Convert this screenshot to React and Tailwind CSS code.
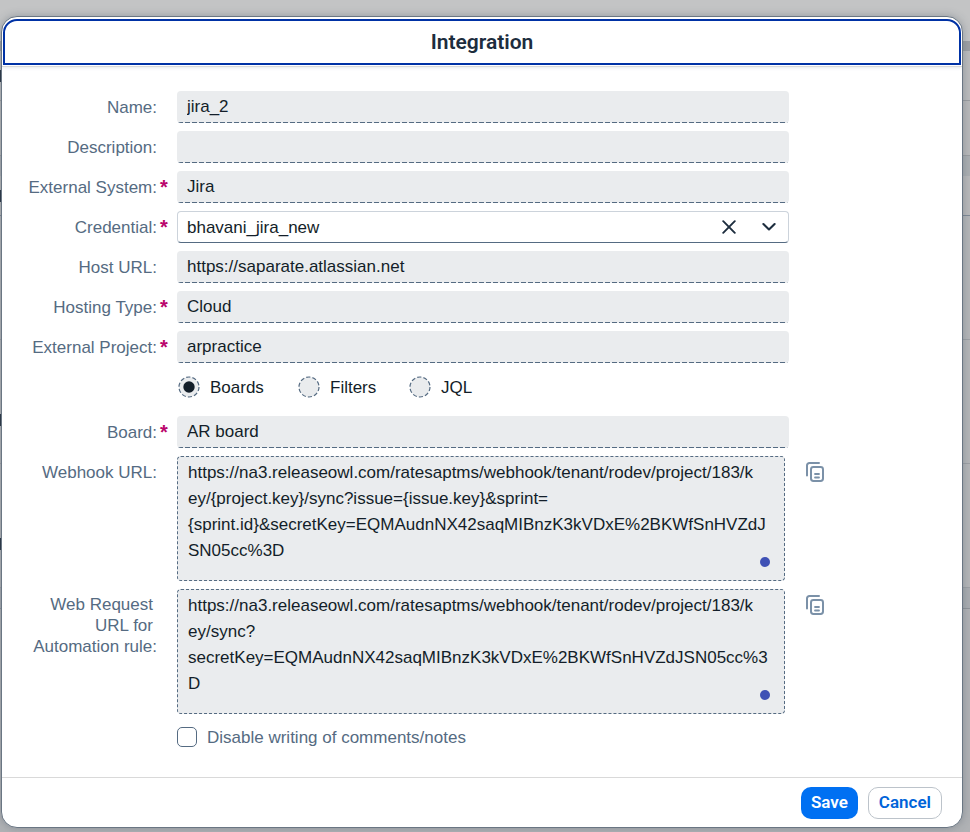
import { useState } from 'react';

const WEBHOOK_URL = [
  'https://na3.releaseowl.com/ratesaptms/webhook/tenant/rodev/project/183/k',
  'ey/{project.key}/sync?issue={issue.key}&sprint=',
  '{sprint.id}&secretKey=EQMAudnNX42saqMIBnzK3kVDxE%2BKWfSnHVZdJ',
  'SN05cc%3D',
].join('\n');

const AUTOMATION_URL = [
  'https://na3.releaseowl.com/ratesaptms/webhook/tenant/rodev/project/183/k',
  'ey/sync?',
  'secretKey=EQMAudnNX42saqMIBnzK3kVDxE%2BKWfSnHVZdJSN05cc%3',
  'D',
].join('\n');

const ROW = 'grid grid-cols-[175px_minmax(0,1fr)_173px]';

function Label({ htmlFor, required, children }) {
  return (
    <label htmlFor={htmlFor} className="flex h-8 items-center justify-end whitespace-nowrap text-[#556b82]">
      {children}:
      <span aria-hidden="true" className="h-5 w-5 pl-[3px] text-xl leading-5 font-bold text-[#ba066c]">
        {required ? '*' : ''}
      </span>
    </label>
  );
}

function ReadOnlyField({ id, label, value, required }) {
  return (
    <div className={ROW}>
      <Label htmlFor={id} required={required}>{label}</Label>
      <input
        id={id}
        readOnly
        value={value}
        className="h-8 w-full rounded bg-[#eaecee] bg-[repeating-linear-gradient(90deg,#556b82_0_5px,#eaecee_5px_7px)] bg-[length:calc(100%-2px)_1px] bg-[position:1px_100%] bg-no-repeat px-2.5 text-[#131e29] outline-none"
      />
    </div>
  );
}

function RadioOption({ label, checked, onChange, className }) {
  return (
    <label className={`flex items-center gap-2.5 text-[#131e29] ${className}`}>
      <span className="grid">
        <input
          type="radio"
          name="source"
          checked={checked}
          onChange={onChange}
          className="col-start-1 row-start-1 size-[22px] appearance-none rounded-full outline-none"
        />
        <svg viewBox="0 0 22 22" className="pointer-events-none col-start-1 row-start-1 size-[22px]">
          <circle cx="11" cy="11" r="10" fill="#eaecee" stroke="#556b82" strokeWidth="1.2" strokeDasharray="4.2 2.083" />
          {checked && <circle cx="11" cy="11" r="5.7" fill="#131e29" />}
        </svg>
      </span>
      {label}
    </label>
  );
}

function CopyButton({ label }) {
  return (
    <button type="button" aria-label={label} className="ml-[17px] flex h-8 w-[18px] items-center self-start">
      <svg viewBox="0 0 18 20" fill="none" stroke="#7b91a8" strokeWidth="2" strokeLinecap="round" className="h-5 w-[18px]">
        <path d="M1 13.5V3.4A2.4 2.4 0 0 1 3.4 1H13" />
        <rect x="5" y="5" width="12" height="14" rx="2.4" />
        <path d="M9 12h4M9 15.5h4" strokeWidth="1.8" />
      </svg>
    </button>
  );
}

function UrlArea({ id, value }) {
  return (
    <div className="relative mr-1">
      <textarea
        id={id}
        readOnly
        wrap="off"
        value={value}
        className="block h-[125px] w-full resize-none overflow-hidden rounded border border-dashed border-[#556b82] bg-[#eaecee] px-2.5 py-[3px] leading-[26px] text-[#131e29] outline-none"
      />
      <span className="absolute right-[15px] bottom-[14px] size-2.5 rounded-full bg-[#3f51b5]" />
    </div>
  );
}

function Backdrop() {
  return (
    <div aria-hidden="true" className="absolute inset-0 flex flex-col bg-[#b4b6b8]">
      <div className="h-[41px] bg-[#c3c4c5]" />
      <div className="h-2.5 bg-[#9da0a4]" />
      <div className="flex h-[50px] items-center border-b border-[#9b9ea1] bg-[#bbbcbd]">
        <span className="h-3 w-0.5 bg-[#2a3644]" />
      </div>
      <div className="h-[55px] border-b border-[#9b9ea1] bg-[#b8b9ba]" />
      <div className="h-5 bg-[#abafb2]" />
      <div className="flex h-10 items-center border-b border-[#7f8a96] bg-[#b8b9ba]">
        <span className="h-3 w-0.5 bg-[#2a3644]" />
      </div>
      <div className="h-[124px] border-b border-[#9da1a5]" />
      <div className="h-[124px] border-b border-[#9da1a5] pt-[74px]">
        <div className="h-3 w-0.5 bg-[#2a3644]" />
      </div>
      <div className="h-[124px] border-b border-[#9da1a5] pt-[74px]">
        <div className="h-3 w-0.5 bg-[#2a3644]" />
      </div>
      <div className="h-[21px] border-b border-[#8f9499] bg-[#a9adb1]" />
      <div className="grow bg-[#b0b2b5]" />
    </div>
  );
}

export default function App() {
  const [source, setSource] = useState('Boards');
  const [disableNotes, setDisableNotes] = useState(false);

  return (
    <div className="relative min-h-screen pt-4 pr-[7px] pb-1 pl-px font-['Liberation_Sans',Arial,sans-serif] text-[17px] leading-[21px]">
      <Backdrop />
      <section
        role="dialog"
        aria-labelledby="dialog-title"
        className="relative overflow-hidden rounded-2xl border border-[#6a7683] bg-white shadow-[0_0_8px_rgba(60,75,90,0.35)]"
      >
        <header className="border-b border-[#d9d9d9] px-px pt-[2px] pb-px shadow-[0_1px_3px_rgba(85,107,130,0.15)]">
          <div className="flex h-[46px] items-center justify-center rounded-t-[14px] border-2 border-[#0032a5]">
            <h1 id="dialog-title" className="font-['Roboto',sans-serif] text-[21px] font-semibold text-[#1d2d3e]">Integration</h1>
          </div>
        </header>

        <form className="flex flex-col gap-2 pt-6 pb-[25px]">
          <ReadOnlyField id="name" label="Name" value="jira_2" />
          <ReadOnlyField id="description" label="Description" value="" />
          <ReadOnlyField id="system" label="External System" value="Jira" required />
          <div className={ROW}>
            <Label htmlFor="credential" required>Credential</Label>
            <div className="flex h-8 items-center rounded border border-[#ccd3db] border-b-[#556b82] bg-white text-[#131e29]">
              <input
                id="credential"
                role="combobox"
                aria-expanded="false"
                defaultValue="bhavani_jira_new"
                className="min-w-0 grow bg-transparent pl-[9px] outline-none"
              />
              <button type="button" aria-label="Clear" className="flex h-full w-[42px] items-center justify-center">
                <svg viewBox="0 0 14 14" fill="none" stroke="#1d2d3e" strokeWidth="1.9" strokeLinecap="round" className="size-3.5">
                  <path d="M1.2 1.2l11.6 11.6M12.8 1.2L1.2 12.8" />
                </svg>
              </button>
              <button type="button" aria-label="Show options" className="flex h-full w-[38px] items-center justify-center">
                <svg viewBox="0 0 14 14" fill="none" stroke="#1d2d3e" strokeWidth="2.1" strokeLinecap="round" strokeLinejoin="round" className="size-3.5">
                  <path d="M1.4 4L7 9.4l5.6-5.4" />
                </svg>
              </button>
            </div>
          </div>
          <ReadOnlyField id="host" label="Host URL" value="https://saparate.atlassian.net" />
          <ReadOnlyField id="hosting" label="Hosting Type" value="Cloud" required />
          <ReadOnlyField id="project" label="External Project" value="arpractice" required />

          <div className={`${ROW} pb-[5px]`}>
            <div role="radiogroup" aria-label="Source" className="col-start-2 flex h-8 items-center pl-px">
              <RadioOption label="Boards" checked={source === 'Boards'} onChange={() => setSource('Boards')} className="w-[120px]" />
              <RadioOption label="Filters" checked={source === 'Filters'} onChange={() => setSource('Filters')} className="w-[111px]" />
              <RadioOption label="JQL" checked={source === 'JQL'} onChange={() => setSource('JQL')} className="" />
            </div>
          </div>

          <ReadOnlyField id="board" label="Board" value="AR board" required />

          <div className={ROW}>
            <Label htmlFor="webhook">Webhook URL</Label>
            <UrlArea id="webhook" value={WEBHOOK_URL} />
            <CopyButton label="Copy webhook URL" />
          </div>

          <div className={ROW}>
            <label htmlFor="automation" className="pt-[5px] pr-5 text-right text-[#556b82]">
              <span className="block pr-1">Web Request</span>
              <span className="block pr-1">URL for</span>
              <span className="block">Automation rule:</span>
            </label>
            <UrlArea id="automation" value={AUTOMATION_URL} />
            <CopyButton label="Copy automation URL" />
          </div>

          <div className={ROW}>
            <label className="col-start-2 flex h-[30px] items-center gap-2.5 text-[#556b82]">
              <input
                type="checkbox"
                checked={disableNotes}
                onChange={(e) => setDisableNotes(e.target.checked)}
                className="size-5 appearance-none rounded-[5px] border border-[#556b82] bg-white checked:bg-[#556b82]"
              />
              Disable writing of comments/notes
            </label>
          </div>
        </form>

        <footer className="flex h-[50px] items-center justify-end gap-2.5 border-t border-[#d9d9d9] pr-5 font-['Roboto',sans-serif] font-semibold">
          <button type="button" className="h-8 rounded-[10px] bg-[#0070f2] px-2.5 text-white">Save</button>
          <button type="button" className="h-8 rounded-[10px] border border-[#bcc3ca] bg-white px-2.5 text-[#0064d9]">Cancel</button>
        </footer>
      </section>
    </div>
  );
}
